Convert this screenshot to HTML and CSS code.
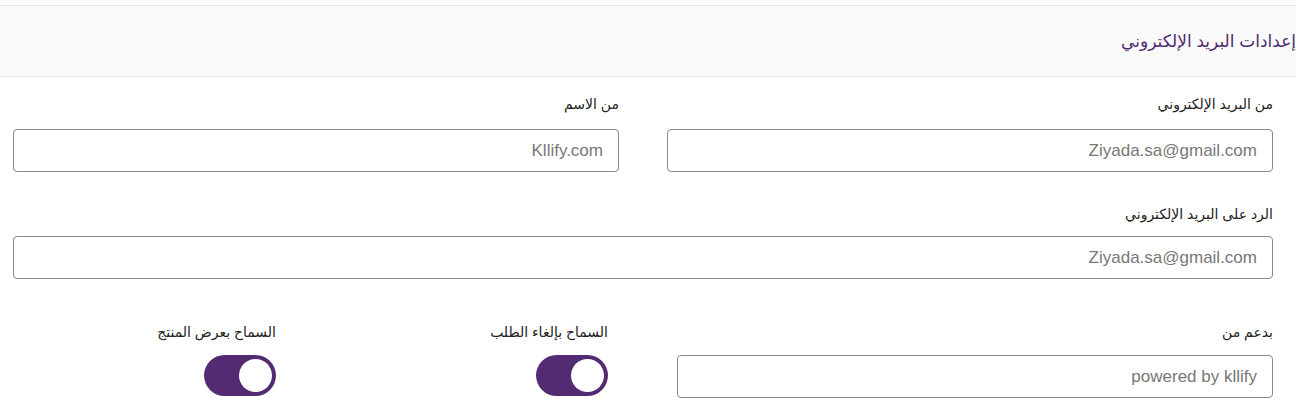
FILE: index.html
```html
<!DOCTYPE html>
<html lang="ar" dir="rtl">
<head>
<meta charset="utf-8">
<link rel="stylesheet" href="styles.css">
</head>
<body>
<div class="page">
  <div class="card-header">
    <h2 class="title">إعدادات البريد الإلكتروني</h2>
  </div>
  <div class="card-body">
    <div class="row two">
      <div class="field">
        <label class="label">من البريد الإلكتروني</label>
        <div class="input" dir="ltr">Ziyada.sa@gmail.com</div>
      </div>
      <div class="field">
        <label class="label">من الاسم</label>
        <div class="input" dir="ltr">Kllify.com</div>
      </div>
    </div>
    <div class="row one">
      <div class="field">
        <label class="label">الرد على البريد الإلكتروني</label>
        <div class="input" dir="ltr">Ziyada.sa@gmail.com</div>
      </div>
    </div>
    <div class="row three">
      <div class="field">
        <label class="label">بدعم من</label>
        <div class="input" dir="ltr">powered by kllify</div>
      </div>
      <div class="field">
        <label class="label">السماح بإلغاء الطلب</label>
        <div class="toggle"><span class="knob"></span></div>
      </div>
      <div class="field">
        <label class="label">السماح بعرض المنتج</label>
        <div class="toggle"><span class="knob"></span></div>
      </div>
    </div>
  </div>
</div>
</body>
</html>
```

FILE: styles.css
```css
* { box-sizing: border-box; }
html, body { margin: 0; padding: 0; background: #fff; }
body {
  font-family: "Liberation Sans", "DejaVu Sans", Arial, sans-serif;
  color: #222;
  overflow: hidden;
}
.page {
  width: 1296px;
  margin-left: 0;
  margin-right: auto;
  padding-top: 5px;
}
.card-header {
  background: #fafafa;
  border-top: 1px solid #e6e6e6;
  border-bottom: 1px solid #e6e6e6;
  height: 72px;
  display: flex;
  align-items: center;
  overflow: hidden;
}
.title {
  margin: 0;
  font-size: 17px;
  font-weight: normal;
  color: #4e2a70;
  padding-top: 1px;
}
.card-body {
  padding: 17px 23px 0 13px;
}
.row {
  display: grid;
  column-gap: 48px;
}
.row.two { grid-template-columns: 1fr 1fr; }
.row.one { grid-template-columns: 1fr; margin-top: 32px; }
.row.three { grid-template-columns: 596px 263px 263px; column-gap: 69px; margin-top: 43px; }
.field {
  display: flex;
  flex-direction: column;
  align-items: flex-start;
}
.label {
  font-size: 14px;
  line-height: 20px;
  margin-bottom: 15px;
  color: #222;
}
.row.one .label { margin-bottom: 12px; }
.row.three .label { margin-bottom: 13px; }
.input {
  width: 100%;
  height: 43px;
  border: 1px solid #8a8a8a;
  border-radius: 4px;
  display: flex;
  align-items: center;
  justify-content: flex-end;
  padding: 0 15px;
  font-size: 17px;
  color: #777;
}
.toggle {
  width: 72px;
  height: 41px;
  border-radius: 21px;
  background: #532b73;
  display: flex;
  align-items: center;
  justify-content: flex-start;
  padding: 0 4px;
}
.knob {
  width: 33px;
  height: 33px;
  border-radius: 50%;
  background: #fff;
}
```
